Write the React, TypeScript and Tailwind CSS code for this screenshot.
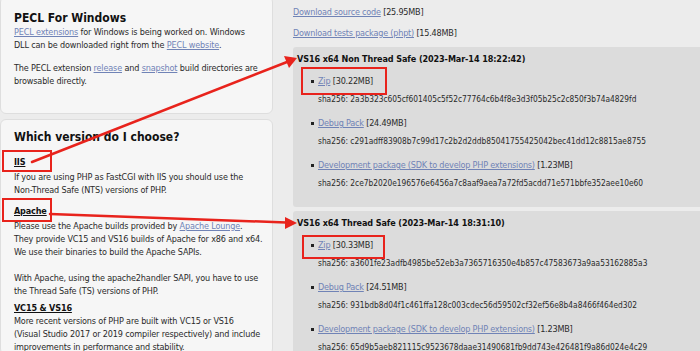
import React from 'react';

const linkCls = 'text-[#7083b6] underline underline-offset-1';

type Pkg = { name: string; size: string; sha: string };

const nts: Pkg[] = [
  { name: 'Zip', size: '[30.22MB]', sha: '2a3b323c605cf601405c5f52c77764c6b4f8e3d3f05b25c2c850f3b74a4829fd' },
  { name: 'Debug Pack', size: '[24.49MB]', sha: 'c291adff83908b7c99d17c2b2d2ddb85041755425042bec41dd12c8815ae8755' },
  { name: 'Development package (SDK to develop PHP extensions)', size: '[1.23MB]', sha: '2ce7b2020e196576e6456a7c8aaf9aea7a72fd5acdd71e571bbfe352aee10e60' },
];

const ts: Pkg[] = [
  { name: 'Zip', size: '[30.33MB]', sha: 'a3601fe23adfb4985be52eb3a7365716350e4b857c47583673a9aa53162885a3' },
  { name: 'Debug Pack', size: '[24.51MB]', sha: '931bdb8d04f1c461ffa128c003cdec56d59502cf32ef56e8b4a8466f464ed302' },
  { name: 'Development package (SDK to develop PHP extensions)', size: '[1.23MB]', sha: '65d9b5aeb821115c9523678daae31490681fb9dd743e426481f9a86d024e4c29' },
];

function Build({ title, pkgs }: { title: string; pkgs: Pkg[] }) {
  return (
    <div className="bg-[#dcdcdc] rounded-l-[3px] pl-[4px] pt-[6px] h-[160px] shrink-0">
      <div className="font-bold text-[9px] tracking-[-0.1px] leading-[13px] text-[#111]">{title}</div>
      <ul className="mt-[9px] flex flex-col gap-[11px] pl-[21px]">
        {pkgs.map((p) => (
          <li key={p.name} className="relative leading-[13px]">
            <span className="absolute left-[-7px] top-[5px] w-[3px] h-[3px] bg-[#222]" />
            <div className="tracking-[-0.2px]">
              <span className={linkCls}>{p.name}</span> {p.size}
            </div>
            <div className="mt-[5px] text-[8.3px]">sha256: {p.sha}</div>
          </li>
        ))}
      </ul>
    </div>
  );
}

function Overlay() {
  return (
    <svg className="absolute inset-0 pointer-events-none" width="700" height="351" viewBox="0 0 700 351">
      <g fill="none" stroke="#e8231c" strokeWidth="2">
        <rect x="3" y="151" width="48" height="20" />
        <rect x="3" y="199" width="48" height="22" />
        <rect x="302" y="68" width="84" height="26" />
        <rect x="303" y="236" width="81" height="22" />
      </g>
      <g stroke="#e8231c" strokeWidth="2.5" strokeLinecap="round">
        <line x1="32" y1="162" x2="287" y2="62" />
        <line x1="50" y1="214" x2="286" y2="222.5" />
      </g>
      <g fill="#e8231c">
        <polygon points="297,58 284,56 289,68" />
        <polygon points="297,223 285,217 285,229" />
      </g>
    </svg>
  );
}

export default function App() {
  return (
    <div
      className="relative w-[700px] h-[351px] overflow-hidden bg-[#ececec] text-[#2a2a2a] text-[9px] flex"
      style={{ fontFamily: '"DejaVu Sans Condensed", "DejaVu Sans", Tahoma, sans-serif' }}
    >
      {/* left column */}
      <div className="w-[273px] shrink-0 flex flex-col gap-[5px] -mt-[4px] tracking-[-0.15px] whitespace-nowrap">
        <div className="bg-[#f6f6f6] border border-[#dedede] rounded-md px-[13px] pt-[14px] h-[118px] shrink-0 leading-[13px]">
          <div className="font-bold text-[12px] leading-[15px] tracking-normal text-[#111]">PECL For Windows</div>
          <p>
            <span className={linkCls}>PECL extensions</span> for Windows is being worked on. Windows
            <br />
            DLL can be downloaded right from the <span className={linkCls}>PECL website</span>.
          </p>
          <p className="mt-[10px]">
            The PECL extension <span className={linkCls}>release</span> and{' '}
            <span className={linkCls}>snapshot</span> build directories are
            <br />
            browsable directly.
          </p>
        </div>
        <div className="bg-[#f6f6f6] border border-[#dedede] rounded-md px-[13px] pt-[9px] flex-1 leading-[13px]">
          <div className="font-bold text-[12px] leading-[16px] tracking-normal text-[#111]">Which version do I choose?</div>
          <div className="mt-[11px] font-bold underline text-[#111]">IIS</div>
          <p className="mt-[2px]">
            If you are using PHP as FastCGI with IIS you should use the
            <br />
            Non-Thread Safe (NTS) versions of PHP.
          </p>
          <div className="mt-[8px] font-bold underline text-[#111]">Apache</div>
          <p className="mt-[2px]">
            Please use the Apache builds provided by <span className={linkCls}>Apache Lounge</span>.
            <br />
            They provide VC15 and VS16 builds of Apache for x86 and x64.
            <br />
            We use their binaries to build the Apache SAPIs.
          </p>
          <p className="mt-[13px]">
            With Apache, using the apache2handler SAPI, you have to use
            <br />
            the Thread Safe (TS) versions of PHP.
          </p>
          <div className="mt-[4px] font-bold underline text-[#111]">VC15 &amp; VS16</div>
          <p>
            More recent versions of PHP are built with VC15 or VS16
            <br />
            (Visual Studio 2017 or 2019 compiler respectively) and include
            <br />
            improvements in performance and stability.
          </p>
        </div>
      </div>

      {/* right column */}
      <div className="flex-1 pl-[20px] flex flex-col leading-[13px]">
        <div className="pt-[6px] tracking-[-0.2px]">
          <span className={linkCls}>Download source code</span> [25.95MB]
        </div>
        <div className="mt-[8px] tracking-[-0.2px]">
          <span className={linkCls}>Download tests package (phpt)</span> [15.48MB]
        </div>
        <div className="mt-[7px] flex flex-col gap-[4px]">
          <Build title="VS16 x64 Non Thread Safe (2023-Mar-14 18:22:42)" pkgs={nts} />
          <Build title="VS16 x64 Thread Safe (2023-Mar-14 18:31:10)" pkgs={ts} />
        </div>
      </div>

      <Overlay />
    </div>
  );
}
